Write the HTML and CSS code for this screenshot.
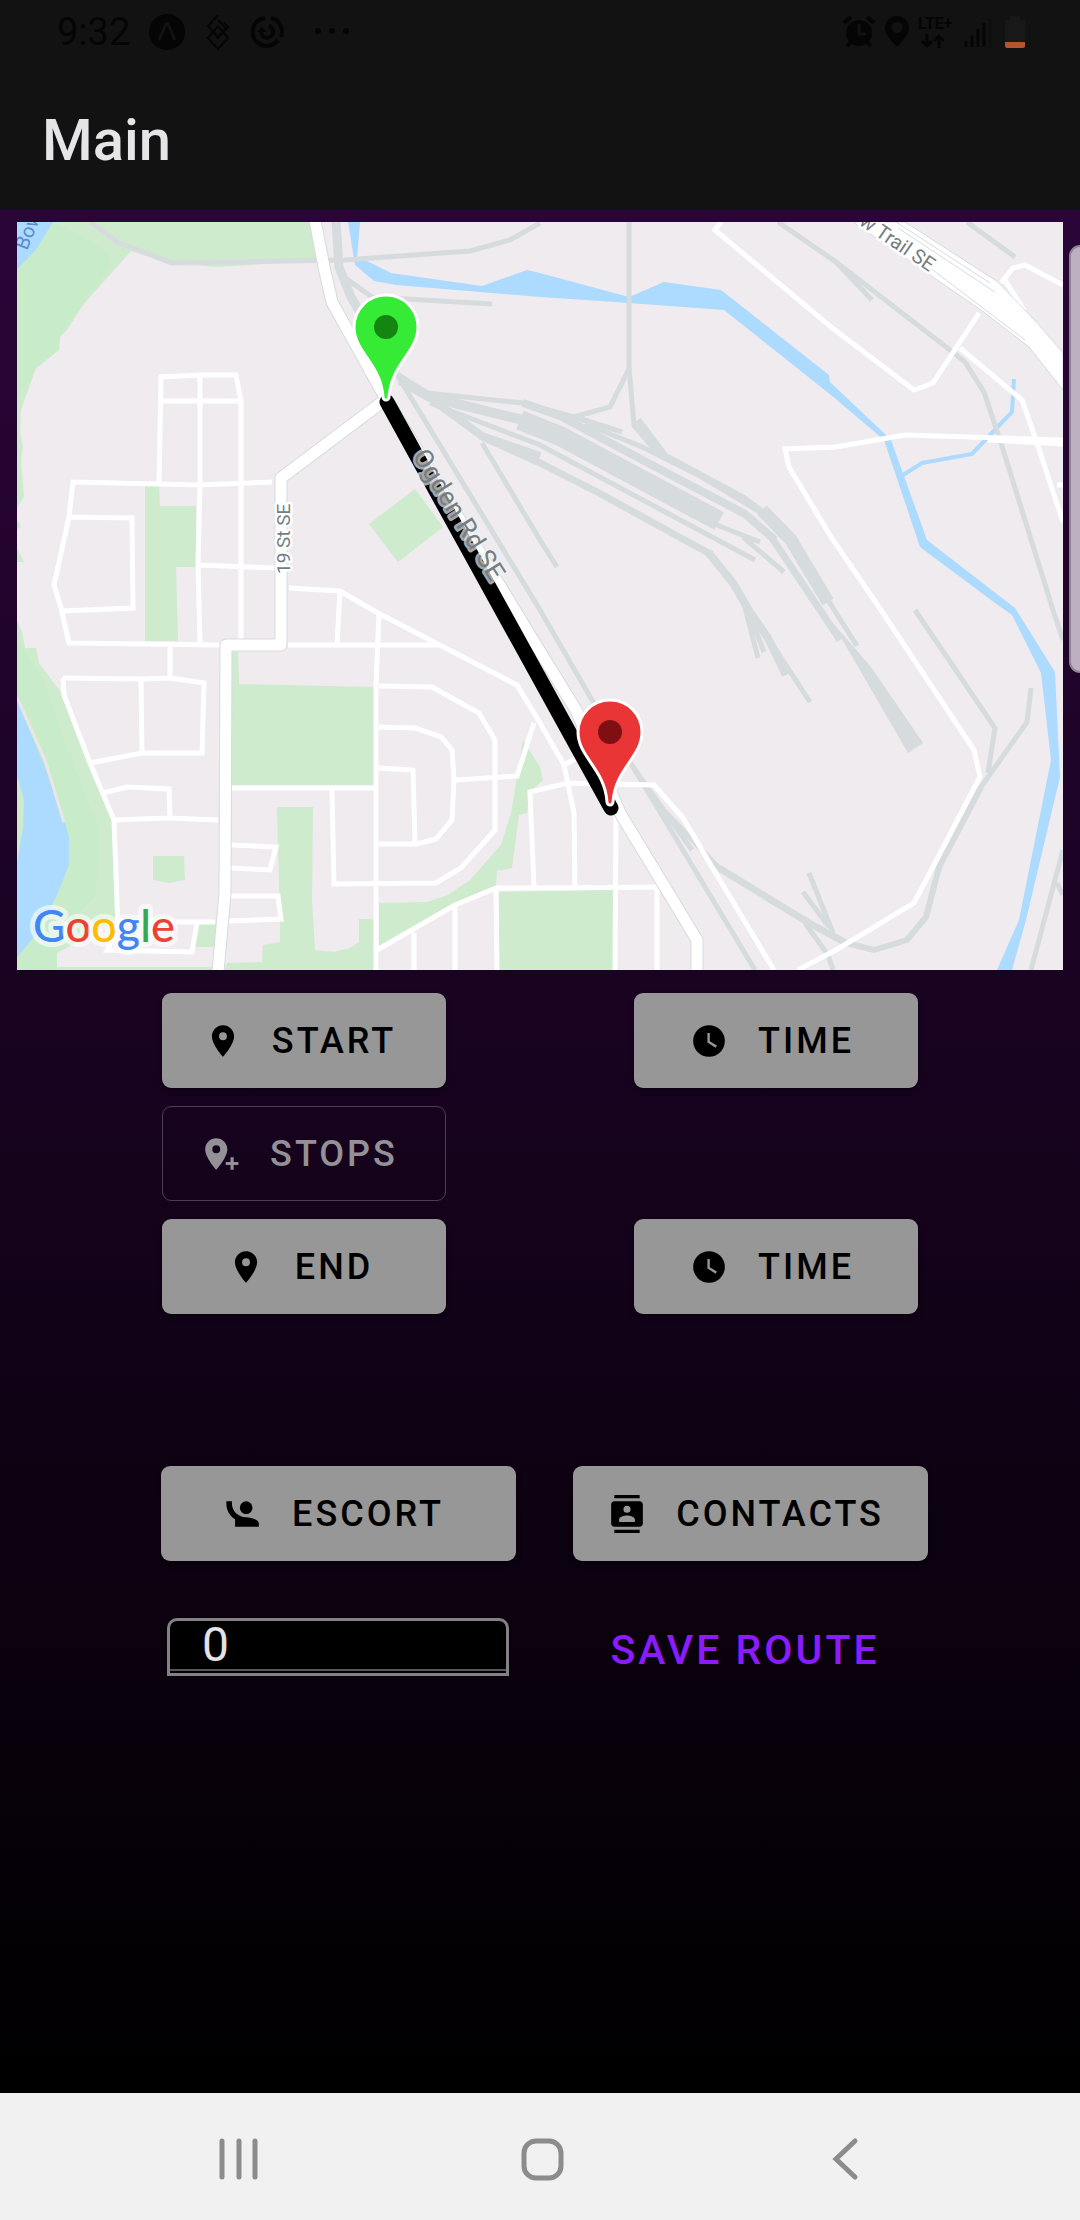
FILE: index.html
```html
<!DOCTYPE html>
<html lang="en">
<head>
  <meta charset="UTF-8">
  <meta name="viewport" content="width=device-width, initial-scale=1.0">
  <title>Main</title>
  <link rel="stylesheet" href="styles.css">
</head>
<body>
  <header class="header">
    <div class="status-bar">
      <div class="status-left">
        <span class="clock">9:32</span>
        <svg class="status-icon" width="38" height="38" viewBox="0 0 38 38">
          <circle cx="19" cy="19" r="18" fill="#050505"/>
          <path d="M11 27L18 11h2l7 16" fill="none" stroke="#121212" stroke-width="3"/>
        </svg>
        <svg class="status-icon" width="24" height="38" viewBox="0 0 24 38" fill="none" stroke="#050505" stroke-width="2">
          <path d="M12 2L2 13l10 11 8-9-8-8M12 13l-10 12 10 11 10-11-10-12M12 13l-5 6 5 6 10-11-4-5"/>
        </svg>
        <svg class="status-icon" width="34" height="38" viewBox="0 0 34 38" fill="none" stroke="#050505" stroke-width="4">
          <path d="M15 5a14 14 0 1 0 13 22M21 5a14 14 0 0 1 10 19"/>
          <path d="M19 13a6 6 0 1 1-8 6"/>
          <path d="M7 19l5-5 5 5z" fill="#050505" stroke="none"/>
        </svg>
        <svg class="status-more" width="36" height="38" viewBox="0 0 36 38" fill="#050505">
          <circle cx="4" cy="18" r="3"/><circle cx="18" cy="18" r="3"/><circle cx="32" cy="18" r="3"/>
        </svg>
      </div>
      <div class="status-right">
        <svg width="34" height="34" viewBox="0 0 34 34">
          <circle cx="17" cy="18" r="13" fill="#050505"/>
          <path d="M2 8l7-6M25 2l7 6M5 31l5-5M29 31l-5-5" stroke="#050505" stroke-width="4"/>
          <path d="M17 9v10h7" fill="none" stroke="#121212" stroke-width="3"/>
        </svg>
        <svg width="26" height="34" viewBox="0 0 26 34">
          <path d="M13 1a12 12 0 0 0-12 12c0 7 6 12 12 19 6-7 12-12 12-19A12 12 0 0 0 13 1zm0 17a5 5 0 1 1 0-11 5 5 0 0 1 0 11z" fill="#050505"/>
        </svg>
        <span class="network">LTE+
          <svg width="24" height="16" viewBox="0 0 24 16" fill="none" stroke="#050505" stroke-width="3">
            <path d="M6 1v12M1 8l5 5 5-5M18 15V3M13 8l5-5 5 5"/>
          </svg>
        </span>
        <svg width="28" height="34" viewBox="0 0 28 34" stroke="#050505" stroke-width="3">
          <path d="M2 32v-6M8 32V20M14 32V14M20 32V8"/>
          <path d="M26 32V3" stroke="#0e0e0e"/>
        </svg>
        <svg class="battery" width="22" height="34" viewBox="0 0 22 34">
          <path d="M1 5h5V1h10v4h5v23H1z" fill="#181818"/>
          <path d="M1 27h20v4a2 2 0 0 1-2 2H3a2 2 0 0 1-2-2z" fill="#b4552f"/>
        </svg>
      </div>
    </div>
    <h1>Main</h1>
  </header>

  <main class="screen">
    <svg class="map" viewBox="17 222 1046 748" role="img" aria-label="Route map">
      <rect x="17" y="222" width="1046" height="748" fill="#efebef"/>

      <!-- parks -->
      <g fill="#ceebce">
        <path d="M53 222H310L316 260 250 265 217 267 172 263 131 251 83 305 67 330 60 337 59 350 36 368 21 410 20 433 23 447 21 460 24 497 17 507V269z"/>
        <path d="M17 520l4 7-4 2zM17 548l7 14h-7z"/>
        <path d="M17 620l5 12 3 16h11l3 15 18 24 7 10 26 66 24 57 3 100-41 23-19 10v17H17V700z"/>
        <path d="M57 967H215v3H57zM197 923h20l-3 24h-20z"/>
        <path d="M415 489l28 38-45 35-29-38z"/>
        <path d="M145 486h14l1 20h36v61h-20l2 74h-33z"/>
        <path d="M231 652h7l1 32 135 3v98H231z"/>
        <path d="M153 856h31l1 24-16 3-16-3z"/>
        <path d="M277 807h36l-1 93 3 50 19 2 16-4 9-6v-23h15v51H224l3-7 35-1 1-17 17-3v-22z"/>
        <path d="M379 903l48-1 21-7 22-15 31-35 10-32 6-36 6-37 17 27 3 13-13 12-3 21-8 2-7 53-15 3-1 16-38 18-79 43z"/>
        <path d="M499 892l115-2v80H499z"/>
      </g>
      <g fill="#c8ebc9">
        <path d="M53 222l22 10 35 22v12L60 335l-1 15-23 18-19 30V269z"/>
        <path d="M17 640l28 43 20 60 33 84-2 68-27 28-12 30v17H17z"/>
      </g>

      <!-- water -->
      <g fill="#addbff">
        <path d="M17 222H53L36 250 17 269z"/>
        <path d="M17 700l4 10 24 57 20 56 4 14v28l-12 30-5 10-18 32-17 20z"/>
        <path d="M348 222H360L357 260 367 261 391 273 482 286 527 270 540 273 629 297 664 282 721 290 829 375 830 382 884 433 891 440 927 540 1015 608 1055 672 1060 777 1026 920 1012 970H997L1019 920 1051 760 1041 673 1012 615 991 600 920 547 884 440 831 395 724 310 629 303 540 297 396 285 374 281 355 265z"/>
        <path d="M903 475L922 463 972 454 1012 412 1014 379" fill="none" stroke="#addbff" stroke-width="4"/>
      </g>
      <path d="M17 775l7 25-1 27-6 36z" fill="#ceebce"/>
      <path d="M17 697L45 760 64 822" fill="none" stroke="#ebe6e6" stroke-width="3"/>

      <!-- rail yard -->
      <g fill="none" stroke="#d6dbde" stroke-width="5">
        <path d="M91 222L117 242 172 263 344 260 470 251 510 240 540 223"/>
        <path d="M336 222L339 267 351 297 396 373" stroke-width="9"/>
        <path d="M396 373L540 610 592 700 633 767 755 970"/>
        <path d="M344 277L372 297 492 304"/>
        <path d="M396 373L427 393 523 403 574 417 622 432"/>
        <path d="M400 380L430 397 490 412 540 424" stroke-width="10"/>
        <path d="M520 420L560 436 719 521" stroke-width="20"/>
        <path d="M430 398L482 436 540 456" stroke-width="8"/>
        <path d="M523 403L560 416 650 464 745 514 775 540" stroke-width="8"/>
        <path d="M574 417L610 428M585 424L640 446 700 476 765 515"/>
        <path d="M629 222V367L634 425 657 453"/>
        <path d="M638 420L665 456 743 498 766 515" stroke-width="7"/>
        <path d="M762 510L791 540 828 602" stroke-width="13"/>
        <path d="M770 535L824 616 840 640" stroke-width="7"/>
        <path d="M828 600L857 646M630 367L610 407 574 417"/>
        <path d="M430 403L540 445 755 560"/>
        <path d="M480 436L540 463 599 493 712 555" stroke-width="7"/>
        <path d="M708 552L733 583 750 612 768 638 786 675" stroke-width="8"/>
        <path d="M742 596L758 658M748 610L764 652M750 610L810 702"/>
        <path d="M482 443L540 540 557 567M699 518L760 542M743 537L784 572"/>
        <path d="M778 222L836 262 950 350 965 362 984 392 1001 443 1053 610 1063 640M836 262L872 300M967 222L1015 257"/>
        <path d="M633 767L692 850M654 800L719 868"/>
        <path d="M719 868L809 923 846 943" stroke-width="7"/>
        <path d="M846 943L874 950 907 940 926 917 939 867 981 787" stroke-width="6"/>
        <path d="M981 787L1027 722 1031 688M915 610L995 728 988 773" />
        <path d="M809 873L833 933M803 892L829 927M805 923L828 955 833 970M1063 850L1031 970M1057 883L1063 895"/>
      </g>
      <path d="M832 622l39 45 52 76-15 10z" fill="#d6dbde"/>

      <!-- small streets -->
      <g fill="none" stroke="#fff" stroke-width="5">
        <path d="M159 483L161 377 200 375H236L241 401V642M161 401H241M200 375V484L198 563 200 642"/>
        <path d="M272 482L200 485 73 482 69 517 54 585 61 608 69 643 220 645M69 517L132 518 133 608 61 611M198 565L274 568"/>
        <path d="M289 588L340 591 378 613 517 685 540 723 564 765 574 813 575 887M564 765L580 756M340 591L337 645M288 645H441"/>
        <path d="M379 613L376 685V970M379 686L432 687 479 713 495 740V830L461 868 436 883 334 884 332 790"/>
        <path d="M379 727L415 728 441 737 452 750 454 780 452 820 436 839 417 844H379M379 768L413 770 415 843M455 780L517 776 534 723M231 788H375"/>
        <path d="M170 647V678M63 678L141 679 170 678 204 683 202 753H142L90 763M141 679L142 753"/>
        <path d="M63 678L64 695 90 763 114 820 118 930 107 950 192 952 197 923M118 922H215M103 793L127 787 169 789 170 818M114 820L169 818 218 820"/>
        <path d="M231 845L276 847 270 870 231 868M231 896H278L281 919 229 921"/>
        <path d="M377 950L455 905 496 888H540L657 887V970M414 933V970M455 905V970M496 890L497 970"/>
        <path d="M534 887L530 792 568 783 654 785 683 818 712 867 774 970M616 813L615 970"/>
        <path d="M721 222L715 230 831 327 914 390 933 383 979 313M960 348L1022 400 1036 440 1063 522M1057 485H1063"/>
        <path d="M1063 440L905 435 836 447 785 449 789 467 831 537 881 610 974 750 980 777 914 903 836 950 798 970M988 440L1063 444"/>
        <path d="M1001 283L1013 268 1025 265 1063 285M1003 277L1024 310"/>
      </g>

      <!-- main roads -->
      <path d="M853 222H905L998 282 1039 325 1063 353V390L1029 347 981 310z" fill="#fff" stroke="#d6dbde"/>
      <path d="M898 228L995 292M929 267L1025 340M896 222L990 283" stroke="#d6dbde"/>
      <g fill="none" stroke="#d6dbde" stroke-width="13" stroke-linejoin="round">
        <path d="M382 402L281 478V645H226L225 893 218 972"/>
        <path d="M315 220L324 267 332 302 382 392 533 640 576 710 620 813 697 940V972"/>
      </g>
      <g fill="none" stroke="#fff" stroke-width="11" stroke-linejoin="round">
        <path d="M382 402L281 478V645H226L225 893 218 972"/>
        <path d="M315 220L324 267 332 302 382 392 533 640 576 710 620 813 697 940V972"/>
      </g>

      <!-- route -->
      <path d="M387 402L611 808" stroke="#000" stroke-width="15" stroke-linecap="round"/>

      <g class="map-label">
        <text transform="translate(290 574) rotate(-90)" font-size="19">19 St SE</text>
        <text transform="translate(412 456) rotate(58)" font-size="26" class="on-route">Ogden Rd SE</text>
        <text transform="translate(858 224) rotate(34)" font-size="20">w Trail SE</text>
        <text transform="translate(27 251) rotate(-68)" font-size="20" class="river">Bow</text>
      </g>

      <g stroke="#fff" stroke-width="3">
        <path transform="translate(386 327)" d="M-32 0a32 32 0 0 1 64 0c0 25-27 37-29 70a3 3 0 0 1-6 0c-2-33-29-45-29-70z" fill="#36eb36"/>
        <path transform="translate(610 732)" d="M-32 0a32 32 0 0 1 64 0c0 25-27 37-29 70a3 3 0 0 1-6 0c-2-33-29-45-29-70z" fill="#e93535"/>
      </g>
      <circle cx="386" cy="327" r="12" fill="#138510"/>
      <circle cx="610" cy="732" r="12" fill="#7f0f12"/>

      <text class="map-logo" x="33" y="942"><tspan fill="#4285f4">G</tspan><tspan fill="#ea4335">o</tspan><tspan fill="#fbbc05">o</tspan><tspan fill="#4285f4">g</tspan><tspan fill="#34a853">l</tspan><tspan fill="#ea4335">e</tspan></text>
    </svg>

    <div class="stops">
      <div class="row">
        <button class="btn">
          <svg class="icon" viewBox="0 0 24 24"><path d="M12 2C8.130 2 5 5.130 5 9c0 5.250 7 13 7 13s7-7.750 7-13c0-3.870-3.130-7-7-7zm0 9.500a2.500 2.500 0 1 1 0-5 2.500 2.500 0 0 1 0 5z"/></svg>
          START
        </button>
        <button class="btn">
          <svg class="icon" viewBox="0 0 24 24"><path d="M12 2A10 10 0 0 0 2 12a10 10 0 0 0 20 0A10 10 0 0 0 12 2m4.200 14.200L11 13V7h1.500v5.200l4.500 2.700z"/></svg>
          TIME
        </button>
      </div>
      <div class="row">
        <button class="btn outlined">
          <svg class="icon" viewBox="0 0 24 24"><path d="M9 11.500a2.500 2.500 0 1 0 0-5 2.500 2.500 0 0 0 0 5M9 2c3.860 0 7 3.130 7 7 0 5.250-7 13-7 13S2 14.250 2 9a7 7 0 0 1 7-7m6 15h3v-3h2v3h3v2h-3v3h-2v-3h-3z"/></svg>
          STOPS
        </button>
      </div>
      <div class="row">
        <button class="btn">
          <svg class="icon" viewBox="0 0 24 24"><path d="M12 2C8.130 2 5 5.130 5 9c0 5.250 7 13 7 13s7-7.750 7-13c0-3.870-3.130-7-7-7zm0 9.500a2.500 2.500 0 1 1 0-5 2.500 2.500 0 0 1 0 5z"/></svg>
          END
        </button>
        <button class="btn">
          <svg class="icon" viewBox="0 0 24 24"><path d="M12 2A10 10 0 0 0 2 12a10 10 0 0 0 20 0A10 10 0 0 0 12 2m4.200 14.200L11 13V7h1.500v5.200l4.500 2.700z"/></svg>
          TIME
        </button>
      </div>
    </div>

    <div class="extras">
      <button class="btn">
        <svg class="icon" viewBox="0 0 24 24"><path d="M1.500 4v1.500c0 4.150 2.210 7.780 5.500 9.800V20h15v-2c0-2.660-5.330-4-8-4h-.25C9 14 5 10 5 5.500V4M14 4a4 4 0 1 0 0 8 4 4 0 0 0 0-8z"/></svg>
        ESCORT
      </button>
      <button class="btn">
        <svg class="icon" viewBox="0 0 24 24"><path d="M20 0H4v2h16V0zM4 24h16v-2H4v2zM20 4H4c-1.100 0-2 .9-2 2v12c0 1.100.9 2 2 2h16c1.100 0 2-.9 2-2V6c0-1.100-.9-2-2-2zm-8 2.750a2.250 2.250 0 1 1 0 4.500 2.250 2.250 0 0 1 0-4.500zM17 17H7v-1.500c0-1.670 3.330-2.500 5-2.500s5 .83 5 2.500V17z"/></svg>
        CONTACTS
      </button>
      <input class="route-input" type="text" inputmode="numeric" value="0" aria-label="Route number">
      <button class="save">SAVE ROUTE</button>
    </div>
    <div class="edge-handle"></div>
  </main>

  <nav class="nav-bar">
    <button aria-label="Recents">
      <svg width="44" height="44" viewBox="0 0 44 44"><path d="M5 4v36M22 4v36M38 4v36"/></svg>
    </button>
    <button aria-label="Home">
      <svg width="44" height="44" viewBox="0 0 44 44"><rect x="4" y="4" width="37" height="37" rx="12"/></svg>
    </button>
    <button aria-label="Back">
      <svg width="44" height="44" viewBox="0 0 44 44"><path d="M32 4L13 22l19 18"/></svg>
    </button>
  </nav>
</body>
</html>
```
FILE: styles.css
```css
* {
  box-sizing: border-box;
}
body {
  margin: 0;
  min-height: 100vh;
  display: flex;
  flex-direction: column;
  font-family: Roboto, "Liberation Sans", sans-serif;
  background-color: black;
}
button {
  font-family: inherit;
  border: none;
  background: none;
  padding: 0;
  cursor: pointer;
}
.header {
  background-color: #121212;
  height: 210px;
}
.status-bar {
  display: flex;
  justify-content: space-between;
  align-items: center;
  height: 64px;
  padding: 0 54px 0 57px;
  color: #050505;
}
.status-left,
.status-right {
  display: flex;
  align-items: center;
}
.clock {
  font-size: 38px;
  line-height: 64px;
  margin-right: 18px;
}
.status-icon {
  margin-right: 20px;
}
.status-more {
  margin-left: 10px;
}
.status-right {
  gap: 8px;
}
.network {
  display: flex;
  flex-direction: column;
  width: 38px;
  font-size: 16px;
  line-height: 18px;
  font-weight: 700;
}
.network svg {
  margin-left: 3px;
}
.battery {
  margin-left: 4px;
}
h1 {
  margin: 0;
  padding: 42px 42px 0;
  font-size: 58px;
  line-height: 68px;
  font-weight: 500;
  color: #e5e4e6;
}
.screen {
  position: relative;
  flex: 1;
  padding-top: 12px;
  background: linear-gradient(#2b0539, #000);
}
.map {
  display: block;
  width: calc(100% - 34px);
  margin: 0 auto;
}
.map-label {
  fill: #747d82;
  stroke: #fff;
  stroke-width: 5px;
  stroke-linejoin: round;
  paint-order: stroke;
}
.map-label .on-route {
  stroke: rgba(240, 240, 240, 0.7);
}
.map-label .river {
  fill: #5a8bd0;
  stroke: none;
}
.map-logo {
  font-family: Lato, sans-serif;
  font-size: 45px;
  font-weight: 500;
  stroke: rgba(255, 255, 255, 0.6);
  stroke-width: 10px;
  stroke-linejoin: round;
  paint-order: stroke;
}
.stops {
  display: flex;
  flex-direction: column;
  gap: 18px;
  padding: 23px 15% 0;
}
.row {
  display: flex;
  justify-content: space-between;
}
.btn {
  display: flex;
  align-items: center;
  justify-content: center;
  gap: 30px;
  width: 284px;
  height: 95px;
  padding-right: 8px;
  border-radius: 9px;
  background-color: #979797;
  box-shadow: 0 3px 5px rgba(0, 0, 0, 0.4);
  color: black;
  font-size: 36px;
  font-weight: 500;
  letter-spacing: 3px;
}
.btn.outlined {
  background: none;
  box-shadow: none;
  border: 1px solid #4b3d52;
  color: #949196;
}
.icon {
  width: 38px;
  height: 38px;
  flex: none;
  fill: currentColor;
}
.extras {
  display: grid;
  grid-template-columns: 355px 355px;
  justify-content: center;
  justify-items: center;
  gap: 57px;
  padding: 152px 0 0 8px;
}
.extras .btn {
  width: 355px;
}
.route-input {
  width: 342px;
  height: 58px;
  padding: 0 32px 6px;
  border: 3px solid #838185;
  border-radius: 10px 10px 0 0;
  background-color: black;
  box-shadow: inset 0 -2px black, inset 0 -4px #58565a;
  color: #e3e2e4;
  font-family: inherit;
  font-size: 48px;
}
.save {
  padding: 6px 10px 0 0;
  color: #8a1cfc;
  font-size: 41px;
  font-weight: 500;
  letter-spacing: 3px;
}
/* samsung edge panel handle */
.edge-handle {
  position: absolute;
  top: 35px;
  right: 0;
  width: 11px;
  height: 428px;
  border: 2px solid #8d8591;
  border-right: none;
  border-radius: 12px 0 0 12px;
  background-color: #bdb0c1;
}
.nav-bar {
  display: grid;
  grid-template-columns: repeat(3, 1fr);
  align-items: center;
  height: 127px;
  padding: 8px 84px 0 88px;
  background-color: #f1f1f1;
}
.nav-bar svg {
  fill: none;
  stroke: #8c8c8c;
  stroke-width: 5;
  stroke-linecap: round;
}
```
